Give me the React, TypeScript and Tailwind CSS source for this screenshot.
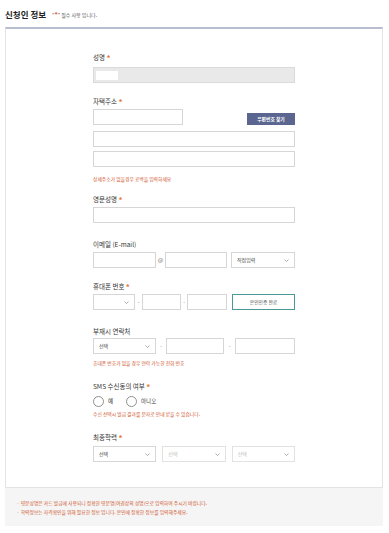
import React from "react";

// Applicant info form (신청인 정보) — fixed 389px mobile-ish layout.

const RED = "text-[#d0542b]";

function Star() {
  return <span className="align-middle text-[8px] font-bold leading-none text-[#e8763a]">*</span>;
}

function Label({ text, required, className = "" }: { text: string; required?: boolean; className?: string }) {
  return (
    <div className={`h-[10px] text-[6.5px] leading-[10px] text-[#333] ${className}`}>
      {text} {required && <Star />}
    </div>
  );
}

function Field({ className = "", gray }: { className?: string; gray?: boolean }) {
  return (
    <div
      className={`h-[16px] border ${
        gray ? "border-[#dadada] bg-[#e9e9e9]" : "border-[#d6d6d6] bg-white"
      } ${className}`}
    />
  );
}

function Chevron() {
  return (
    <svg width="5" height="3" viewBox="0 0 5 3" className="shrink-0">
      <path d="M0.5 0.5 L2.5 2.5 L4.5 0.5" fill="none" stroke="#8a8a8a" strokeWidth="0.7" />
    </svg>
  );
}

function Select({ text, className = "", disabled }: { text?: string; className?: string; disabled?: boolean }) {
  return (
    <div
      className={`flex h-[16px] items-center justify-between border bg-white pl-[5px] pr-[5px] text-[5px] ${
        disabled ? "border-[#e2e2e2] text-[#bdbdbd]" : "border-[#d6d6d6] text-[#444]"
      } ${className}`}
    >
      <span>{text}</span>
      <Chevron />
    </div>
  );
}

function Dash({ className = "" }: { className?: string }) {
  return <span className={`text-center text-[5px] text-[#666] ${className}`}>-</span>;
}

function Radio({ label }: { label: string }) {
  return (
    <div className="flex items-center gap-[4px]">
      <span className="h-[11px] w-[11px] rounded-full border border-[#8f8f8f] bg-white" />
      <span className="text-[5.5px] text-[#333]">{label}</span>
    </div>
  );
}

export default function App() {
  return (
    <div className="min-h-[533px] w-[389px] bg-white font-['Noto_Sans_CJK_KR','Noto_Sans',sans-serif]">
      {/* Title row */}
      <div className="flex h-[27px] items-center pl-[5px] pt-[1px]">
        <h1 className="text-[8.5px] font-semibold text-[#222]">신청인 정보</h1>
        <span className="ml-[6px] mt-[2px] text-[5px] text-[#555]">
          "<span className="text-[6.5px] font-bold text-[#e0552b]">*</span>" 필수 사항 입니다.
        </span>
      </div>

      {/* Card */}
      <div className="ml-[5px] w-[378px]">
        <div className="border-x border-b border-t-2 border-x-[#e3e3e3] border-b-[#e3e3e3] border-t-[#b9bdd0] pb-[25px] pt-[23px]">
          <div className="mx-auto w-[202px]">
            <Label text="성명" required />
            <div className="mt-[5px] flex h-[16px] items-center border border-[#dadada] bg-[#e9e9e9] pl-[2px]">
              <span className="h-[9px] w-[22px] bg-white" />
            </div>

            <Label text="자택주소" required className="mt-[13px]" />
            <div className="mt-[3px] flex items-end justify-between">
              <Field className="w-[90px]" />
              <button className="h-[12px] w-[48px] bg-[#5b6690] text-[4.8px] font-bold leading-[12px] text-white">
                우편번호 찾기
              </button>
            </div>
            <Field className="mt-[6px]" />
            <Field className="mt-[4px]" />
            <div className={`mt-[8px] h-[8px] text-[4.8px] leading-[8px] ${RED}`}>
              상세주소가 없을경우 공백을 입력하세요
            </div>

            <Label text="영문성명" required className="mt-[11px]" />
            <Field className="mt-[3px]" />

            <Label text="이메일 (E-mail)" className="mt-[16px]" />
            <div className="mt-[3px] flex items-center">
              <Field className="w-[63px]" />
              <span className="w-[9px] text-center text-[5.5px] text-[#444]">@</span>
              <Field className="w-[62px]" />
              <Select text="직접입력" className="ml-[4px] flex-1" />
            </div>

            <Label text="휴대폰 번호" required className="mt-[13px]" />
            <div className="mt-[3px] flex items-center">
              <Select className="w-[42px]" />
              <Dash className="w-[7px]" />
              <Field className="w-[39px]" />
              <Dash className="w-[6px]" />
              <Field className="w-[40px]" />
              <button className="ml-[5px] h-[16px] flex-1 border border-[#4a9896] bg-white text-[4.8px] text-[#555]">
                본인인증 완료
              </button>
            </div>

            <Label text="부재시 연락처" className="mt-[16px]" />
            <div className="mt-[2px] flex items-center">
              <Select text="선택" className="w-[63px]" />
              <Dash className="w-[10px]" />
              <Field className="w-[58px]" />
              <Dash className="w-[11px]" />
              <Field className="flex-1" />
            </div>
            <div className={`mt-[5px] h-[8px] text-[4.8px] leading-[8px] ${RED}`}>
              휴대폰 번호가 없을 경우 연락 가능한 전화 번호
            </div>

            <Label text="SMS 수신동의 여부" required className="mt-[14px]" />
            <div className="mt-[5px] flex h-[11px] items-center gap-[13px]">
              <Radio label="예" />
              <Radio label="아니오" />
            </div>
            <div className={`mt-[3px] h-[8px] text-[4.8px] leading-[8px] ${RED}`}>
              수신 선택시 발급 결과를 문자로 안내 받을 수 있습니다.
            </div>

            <Label text="최종학력" required className="mt-[14px]" />
            <div className="mt-[4px] flex gap-[6px]">
              <Select text="선택" className="flex-1" />
              <Select text="선택" className="flex-1" disabled />
              <Select text="선택" className="flex-1" disabled />
            </div>
          </div>
        </div>

        {/* Notes */}
        <div className="h-[38px] bg-[#f5f5f5] pl-[12px] pt-[10px] text-[4.8px] leading-[9px]">
          <p className={RED}>
            <span className="mr-[2px] text-[#999]">-</span>
            영문성명은 카드 발급에 사용되니 정확한 영문명(여권상의 성명)으로 입력하여 주시기 바랍니다.
          </p>
          <p className={RED}>
            <span className="mr-[2px] text-[#999]">-</span>
            학력정보는 자격확인을 위해 필요한 정보 입니다. 본인에 정확한 정보를 입력해주세요.
          </p>
        </div>
      </div>
    </div>
  );
}
